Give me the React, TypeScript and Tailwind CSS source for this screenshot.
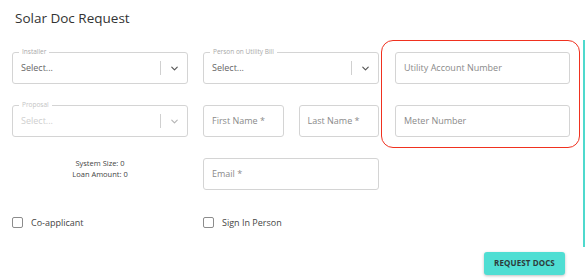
import { ChevronDown } from 'lucide-react';

type SelectProps = { label: string; disabled?: boolean };

function OutlinedSelect({ label, disabled = false }: SelectProps) {
  return (
    <div className="relative h-[32px] rounded-[3px] border border-[#d4d4d4] flex items-center pl-[8px]">
      {/* Legend sitting in the top border */}
      <span
        className={`absolute -top-[5px] left-[6px] bg-white px-[3px] text-[6.5px] leading-[8px] ${
          disabled ? 'text-[#c4c4c4]' : 'text-[#a8a8a8]'
        }`}
      >
        {label}
      </span>
      <span className={`flex-1 text-[9px] ${disabled ? 'text-[#cfcfcf]' : 'text-[#666]'}`}>Select...</span>
      <span className="h-[14px] w-px bg-[#d0d0d0]" />
      <span className="w-[26px] flex justify-center">
        <ChevronDown size={11} strokeWidth={2.5} color={disabled ? '#b5b5b5' : '#555'} />
      </span>
    </div>
  );
}

function TextField({ placeholder }: { placeholder: string }) {
  return (
    <div className="h-[32px] rounded-[3px] border border-[#d4d4d4] flex items-center pl-[8px] text-[9px] text-[#8a8a8a]">
      {placeholder}
    </div>
  );
}

function Checkbox({ label }: { label: string }) {
  return (
    <label className="flex items-center gap-[8px] text-[9px] text-[#444]">
      <span className="w-[11px] h-[11px] rounded-[2px] border-[1.5px] border-[#8c8c8c]" />
      {label}
    </label>
  );
}

export default function App() {
  return (
    <div
      className="relative w-[586px] h-[280px] bg-white overflow-hidden"
      style={{ fontFamily: '"Open Sans", "Noto Sans", sans-serif' }}
    >
      {/* Scrollbar thumb */}
      <div className="absolute right-[1px] top-[40px] w-[2px] h-[207px] bg-[#4fd9cd]" />

      <div className="pl-[12px] pt-[9px]">
        <h1 className="pl-[3px] text-[13.5px] leading-[18px] font-medium text-[#333]">Solar Doc Request</h1>

        <div className="flex items-start mt-[13px]">
          <div className="grid grid-cols-[176px_176px] gap-x-[15px] gap-y-[21px] pt-[12px]">
            <OutlinedSelect label="Installer" />
            <OutlinedSelect label="Person on Utility Bill" />
            <OutlinedSelect label="Proposal" disabled />
            <div className="grid grid-cols-2 gap-x-[15px]">
              <TextField placeholder="First Name *" />
              <TextField placeholder="Last Name *" />
            </div>
            <div className="h-[32px] flex flex-col items-center pt-[0px] text-[7.5px] leading-[11px] text-[#444]">
              <span>System Size: 0</span>
              <span>Loan Amount: 0</span>
            </div>
            <TextField placeholder="Email *" />
          </div>

          <div className="ml-[2px] w-[199px] h-[108px] rounded-[12px] border-[1.5px] border-[#f0311f] pt-[11px] pl-[13px] pr-[9px] flex flex-col gap-[21px]">
            <TextField placeholder="Utility Account Number" />
            <TextField placeholder="Meter Number" />
          </div>
        </div>

        <div className="grid grid-cols-[191px_176px] mt-[26px]">
          <Checkbox label="Co-applicant" />
          <Checkbox label="Sign In Person" />
        </div>

        <div className="flex justify-end pr-[21px] mt-[22px]">
          <button className="w-[81px] h-[23px] rounded-[3px] bg-[#4fded3] shadow-[0_1px_3px_rgba(0,0,0,0.25)] text-[8px] font-bold text-[#2d3a3a] tracking-[0.1px]">
            REQUEST DOCS
          </button>
        </div>
      </div>
    </div>
  );
}
